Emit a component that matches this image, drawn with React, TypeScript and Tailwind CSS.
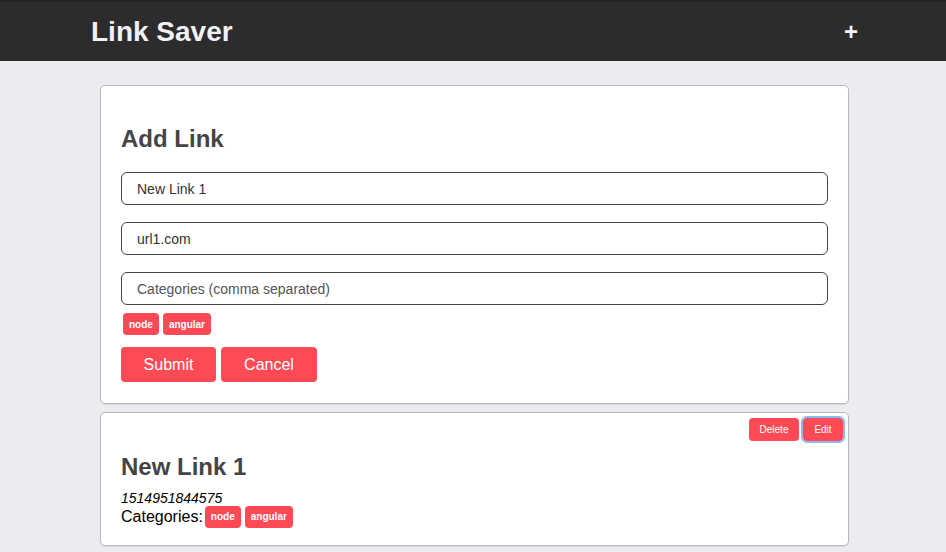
import React from "react";

const Tag = ({ label }: { label: string }) => (
  <span className="inline-flex h-[22px] items-center rounded-[4px] bg-[#fe4a55] px-[6px] text-[10px] font-bold text-white">
    {label}
  </span>
);

export default function App() {
  return (
    <div className="min-h-[552px] bg-[#ebecf0] font-['Liberation_Sans',Arial,sans-serif]">
      <header className="flex h-[61px] items-center justify-between border-t-2 border-[#222] bg-[#2c2c2c] pl-[91px] pr-[88px]">
        <h1 className="text-[28px] font-bold leading-none text-[#f1f1f8]">Link Saver</h1>
        <span className="text-[24px] font-bold leading-none text-[#f1f1f8]">+</span>
      </header>
      <main className="ml-[100px] flex w-[749px] flex-col gap-[8px] pt-[24px]">
        <section className="rounded-[5px] border border-[#b9b9bd] bg-white px-[20px] pb-[21px] pt-[40px] shadow-[0_1px_1px_rgba(0,0,0,0.08)]">
          <h2 className="text-[24px] font-bold leading-[26px] text-[#444]">Add Link</h2>
          <div className="mt-[20px] flex flex-col gap-[17px]">
            <input
              readOnly
              value="New Link 1"
              className="h-[33px] w-full rounded-[6px] border border-[#444] px-[15px] text-[14px] text-[#333] outline-none"
            />
            <input
              readOnly
              value="url1.com"
              className="h-[33px] w-full rounded-[6px] border border-[#444] px-[15px] text-[14px] text-[#333] outline-none"
            />
            <input
              readOnly
              placeholder="Categories (comma separated)"
              className="h-[33px] w-full rounded-[6px] border border-[#444] px-[15px] text-[14px] text-[#333] outline-none placeholder:text-[#555]"
            />
          </div>
          <div className="mt-[8px] flex gap-[4px] pl-[2px]">
            <Tag label="node" />
            <Tag label="angular" />
          </div>
          <div className="mt-[12px] flex gap-[5px]">
            <button className="h-[35px] w-[95px] rounded-[4px] bg-[#fe4a55] text-[16px] text-white">Submit</button>
            <button className="h-[35px] w-[96px] rounded-[4px] bg-[#fe4a55] text-[16px] text-white">Cancel</button>
          </div>
        </section>
        <section className="relative rounded-[5px] border border-[#b9b9bd] bg-white px-[20px] pb-[17px] pt-[41px] shadow-[0_1px_1px_rgba(0,0,0,0.08)]">
          <div className="absolute right-[5px] top-[5px] flex gap-[4px]">
            <button className="h-[23px] w-[50px] rounded-[4px] bg-[#fe4a55] text-[10px] text-white">Delete</button>
            <button className="h-[23px] w-[40px] rounded-[4px] bg-[#fe4a55] text-[10px] text-white outline outline-2 outline-[#8ab8f4]">Edit</button>
          </div>
          <h2 className="text-[24px] font-bold leading-[26px] text-[#444]">New Link 1</h2>
          <div className="mt-[10px] text-[14px] italic leading-[16px] text-black">1514951844575</div>
          <div className="flex items-center gap-[4px] text-[16px] leading-[22px] text-black">
            <span className="mr-[-2px]">Categories:</span>
            <Tag label="node" />
            <Tag label="angular" />
          </div>
        </section>
      </main>
    </div>
  );
}
